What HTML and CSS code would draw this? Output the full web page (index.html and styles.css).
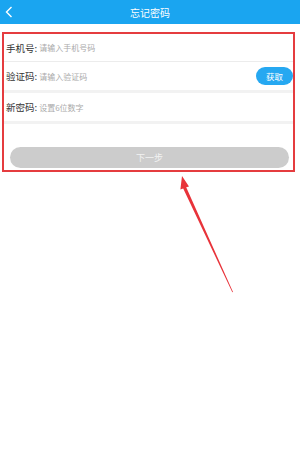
FILE: index.html
```html
<!DOCTYPE html>
<html lang="zh-CN">
<head>
  <meta charset="UTF-8">
  <title>忘记密码</title>
  <link rel="stylesheet" href="styles.css">
</head>
<body>

<div class="topbar">
  <svg class="back" width="8" height="12" viewBox="0 0 8 12">
    <polyline points="6.5,1 1.5,6 6.5,11" fill="none" stroke="#fff" stroke-width="1.4"/>
  </svg>
  <span class="title">忘记密码</span>
</div>

<div class="mark">
  <form class="reset">
    <div class="row line">
      <label>手机号:</label>
      <input type="text" placeholder="请输入手机号码">
    </div>
    <div class="row">
      <label>验证码:</label>
      <input type="text" placeholder="请输入验证码">
      <button type="button" class="get">获取</button>
    </div>
    <div class="sep"></div>
    <div class="row">
      <label>新密码:</label>
      <input type="password" placeholder="设置6位数字">
    </div>
    <div class="sep"></div>
    <button type="submit" class="next" disabled>下一步</button>
  </form>
</div>

<svg class="arrow" width="300" height="460" viewBox="0 0 300 460">
  <polygon points="182,176 189,186.5 186.2,187.2 233,292 232.3,292.3 183.2,188.4 180.4,189.5" fill="#e8333a"/>
</svg>

</body>
</html>
```

FILE: styles.css
```css
body {
  margin: 0;
  width: 300px;
  height: 460px;
  background: #fff;
  font-family: "Noto Sans CJK SC", "Noto Sans", sans-serif;
  color: #333;
  position: relative;
  overflow: hidden;
}

.topbar {
  height: 24px;
  background: #1aa5f0;
  display: flex;
  align-items: center;
  justify-content: center;
  position: relative;
}

.topbar .back {
  position: absolute;
  left: 5px;
  top: 6px;
}

.topbar .title {
  color: #fff;
  font-size: 10px;
}

.mark {
  margin: 8px 0 0 2px;
  width: 289px;
  border: 2px solid #e53c3f;
}

.reset {
  display: flex;
  flex-direction: column;
}

.row {
  display: flex;
  align-items: center;
  height: 28px;
  padding-left: 2px;
}

.row.line {
  height: 27px;
  border-bottom: 1px solid #ececec;
}

.row label {
  font-size: 9.5px;
  color: #333;
  white-space: nowrap;
}

.row input {
  flex: 1;
  min-width: 0;
  border: none;
  outline: none;
  padding: 0;
  margin-left: 2px;
  font-family: inherit;
  font-size: 8px;
  background: transparent;
}

.row input::placeholder {
  color: #aaa;
}

.get {
  width: 37px;
  height: 18px;
  border: none;
  border-radius: 9px;
  background: #26a8f1;
  color: #fff;
  font-family: inherit;
  font-size: 8.5px;
  padding: 0;
  margin-right: 0;
}

.sep {
  height: 3px;
  background: #f2f2f2;
}

.next {
  margin: 23px 4px 2px 6px;
  height: 21px;
  border: none;
  border-radius: 11px;
  background: #cccccc;
  color: #f2f2f2;
  font-family: inherit;
  font-size: 9px;
  padding: 0;
}

.arrow {
  position: absolute;
  left: 0;
  top: 0;
  pointer-events: none;
}
```
